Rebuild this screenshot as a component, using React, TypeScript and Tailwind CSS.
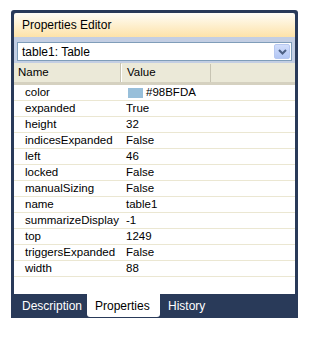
const rows: { name: string; value: string; swatch?: string }[] = [
  { name: 'color', value: '#98BFDA', swatch: '#98BFDA' },
  { name: 'expanded', value: 'True' },
  { name: 'height', value: '32' },
  { name: 'indicesExpanded', value: 'False' },
  { name: 'left', value: '46' },
  { name: 'locked', value: 'False' },
  { name: 'manualSizing', value: 'False' },
  { name: 'name', value: 'table1' },
  { name: 'summarizeDisplay', value: '-1' },
  { name: 'top', value: '1249' },
  { name: 'triggersExpanded', value: 'False' },
  { name: 'width', value: '88' },
]

function Chevron() {
  return (
    <svg width="9" height="6" viewBox="0 0 9 6">
      <path d="M1 1 L4.5 4.5 L8 1" fill="none" stroke="#4d6185" strokeWidth="2" />
    </svg>
  )
}

export default function App() {
  return (
    <div
      className="pt-[10px] pl-[11px] bg-white min-h-[345px]"
      style={{ fontFamily: '"Liberation Sans", Arial, sans-serif' }}
    >
      <div className="w-[287px] h-[308px] bg-[#293a59] rounded-t-[3px] px-[3px] pt-[3px] flex flex-col text-[11.5px] leading-none">
        {/* title */}
        <div className="h-[24px] flex items-center pl-[8px] text-black bg-gradient-to-b from-[#fffdf6] to-[#fde2a8] rounded-t-[2px] text-[12px]">
          Properties Editor
        </div>

        {/* object picker */}
        <div className="h-[26px] bg-[#c3cee3] px-[3px] pt-[5px]">
          <div className="h-[19px] bg-white border border-[#7f9db9] flex items-center justify-between pl-[4px] pr-[1px] text-[12px]">
            <span>table1: Table</span>
            <div className="w-[16px] h-[15px] bg-gradient-to-b from-[#d2defb] to-[#b3c7f5] border border-[#b7c8f0] rounded-[2px] flex items-center justify-center">
              <Chevron />
            </div>
          </div>
        </div>

        {/* column header */}
        <div className="h-[22px] bg-[#ebe9d8] border-b-[3px] border-[#d5d1c0] flex items-center">
          <div className="w-[107px] pl-[4px] h-full flex items-center border-r border-[#c7c4b3]">Name</div>
          <div className="w-[90px] pl-[5px] h-[18px] flex items-center border-r border-[#c7c4b3] border-l border-l-white">
            Value
          </div>
        </div>

        {/* rows */}
        <div className="flex-1 bg-white">
          {rows.map((r) => (
            <div key={r.name} className="h-[16px] flex items-center border-b border-[#ebe7d2]">
              <div className="w-[107px] pl-[11px]">{r.name}</div>
              <div className="pl-[5px] flex items-center gap-[3px]">
                {r.swatch && <span className="w-[15px] h-[10px] bg-[#98BFDA] ml-[2px]" />}
                <span>{r.value}</span>
              </div>
            </div>
          ))}
        </div>

        {/* tabs */}
        <div className="h-[24px] flex items-start text-[12px]">
          <div className="w-[73px] h-[23px] pl-[8px] flex items-center text-white">Description</div>
          <div className="w-[73px] h-[23px] pl-[8px] flex items-center bg-white text-black rounded-b-[3px]">Properties</div>
          <div className="h-[23px] pl-[8px] flex items-center text-white">History</div>
        </div>
      </div>
    </div>
  )
}
